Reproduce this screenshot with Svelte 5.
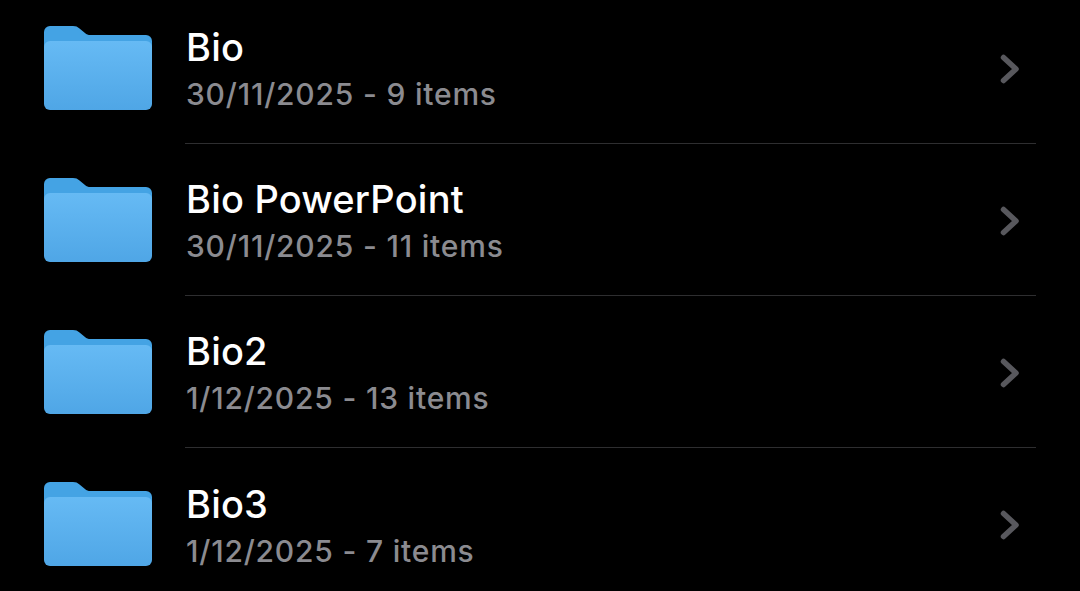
<script lang="ts">
  const folders = [
    { name: "Bio", meta: "30/11/2025 - 9 items" },
    { name: "Bio PowerPoint", meta: "30/11/2025 - 11 items" },
    { name: "Bio2", meta: "1/12/2025 - 13 items" },
    { name: "Bio3", meta: "1/12/2025 - 7 items" },
  ];
</script>

<div class="list">
  {#each folders as f, i (f.name)}
    <div class="row">
      <svg class="folder" width="108" height="84" viewBox="0 0 108 84" aria-hidden="true">
        <defs>
          <linearGradient id={`front-${i}`} x1="0" y1="0" x2="0" y2="1">
            <stop offset="0" stop-color="#66baf4" />
            <stop offset="1" stop-color="#4fa6e6" />
          </linearGradient>
        </defs>
        <path
          d="M0 24V6a6 6 0 0 1 6-6h23c3 0 4.500 .8 6.500 2.500L41 7c1.600 1.500 3 2 5.500 2H102a6 6 0 0 1 6 6v12H0z"
          fill="#44a3e4"
        />
        <rect x="0" y="15" width="108" height="69" rx="6" fill={`url(#front-${i})`} />
      </svg>
      <div class="body">
        <div class="text">
          <div class="name">{f.name}</div>
          <div class="meta">{f.meta}</div>
        </div>
        <svg class="chev" width="20" height="30" viewBox="0 0 20 30" aria-hidden="true">
          <path d="M3.500 3.500 16 15 3.500 26.500" fill="none" stroke="#58585d" stroke-width="5.500" stroke-linecap="round" stroke-linejoin="round" />
        </svg>
      </div>
    </div>
  {/each}
</div>

<style>
  :global(body) { background: #000; overflow: hidden; }
  .list {
    height: 591px;
    overflow: hidden;
    margin-top: -8px;
    background: #000;
    font-family: Inter, "Liberation Sans", sans-serif;
  }
  .row {
    display: flex;
    align-items: stretch;
    height: 152px;
    padding-left: 44px;
    box-sizing: border-box;
  }
  .folder { flex: none; margin-top: 34px; }
  .body {
    flex: 1;
    display: flex;
    align-items: center;
    justify-content: space-between;
    margin-left: 33px;
    margin-right: 44px;
    padding-right: 16px;
    border-bottom: 1px solid #2e2e30;
  }
  .row:last-child .body { border-bottom: none; }
  .text { margin-top: -1px; margin-left: 1px; }
  .name {
    color: #fff;
    font-size: 38px;
    font-weight: 500;
    line-height: 54px;
    letter-spacing: 0.2px;
  }
  .meta {
    color: #8b8b90;
    font-size: 30px;
    font-weight: 500;
    line-height: 40px;
    letter-spacing: 0.8px;
  }
  .chev { flex: none; margin-top: 2px; }
</style>
